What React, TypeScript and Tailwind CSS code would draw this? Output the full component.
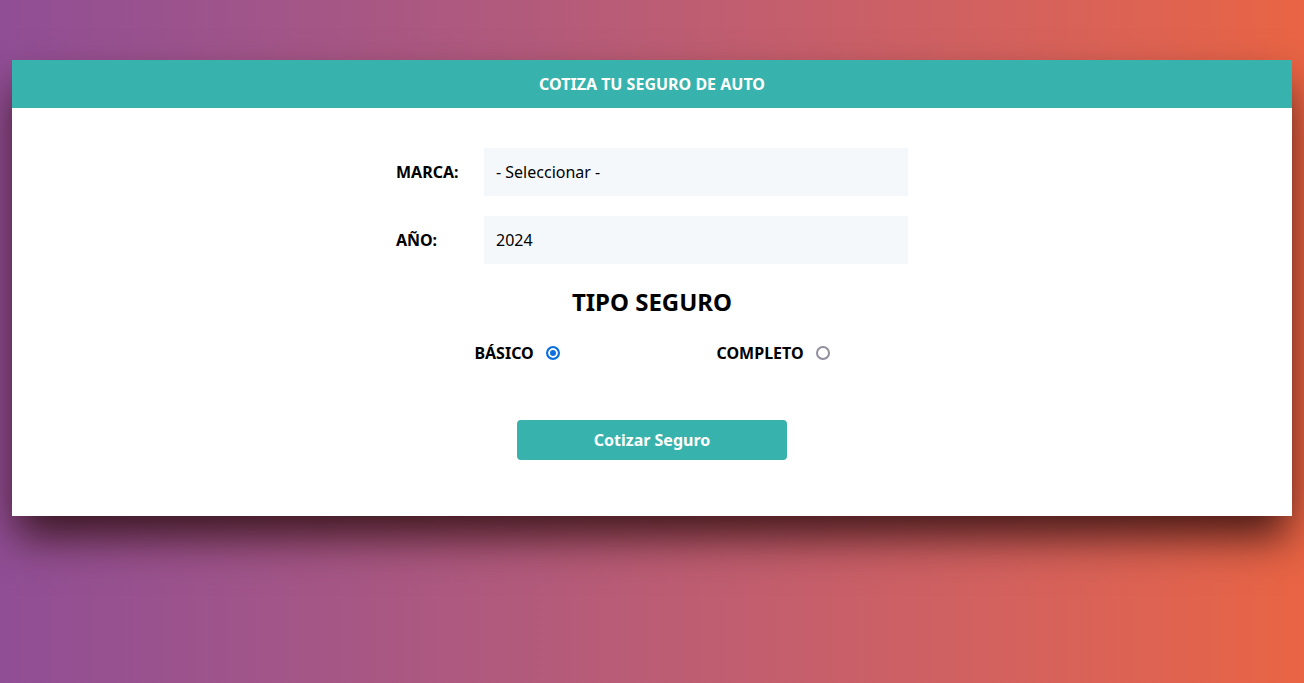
import { useState } from "react";

export default function App() {
  const [plan, setPlan] = useState("basico");

  return (
    <div
      className="min-h-[683px] w-full bg-gradient-to-r from-[#904e95] to-[#e96443] pt-[60px]"
      style={{ fontFamily: '"Noto Sans", "Open Sans", sans-serif' }}
    >
      <div className="mx-3 bg-white shadow-[0_24px_40px_-4px_rgba(40,10,10,0.85)]">
        <header className="flex h-12 items-center justify-center bg-[#38b2ac]">
          <h1 className="text-base font-bold text-white">COTIZA TU SEGURO DE AUTO</h1>
        </header>

        <form className="mx-auto w-[512px] pt-10 pb-14" onSubmit={(e) => e.preventDefault()}>
          <div className="flex items-center">
            <label className="w-[88px] text-base font-bold text-black">MARCA:</label>
            <select className="h-12 flex-1 appearance-none bg-[#f5f8fb] px-3 text-base text-black outline-none">
              <option>- Seleccionar -</option>
              <option>Americano</option>
              <option>Europeo</option>
              <option>Asiático</option>
            </select>
          </div>

          <div className="mt-5 flex items-center">
            <label className="w-[88px] text-base font-bold text-black">AÑO:</label>
            <select className="h-12 flex-1 appearance-none bg-[#f5f8fb] px-3 text-base text-black outline-none">
              <option>2024</option>
              <option>2023</option>
              <option>2022</option>
            </select>
          </div>

          <h2 className="mt-[22px] text-center text-2xl font-bold text-black">TIPO SEGURO</h2>

          <div className="mt-[23px] flex justify-around">
            <label className="flex items-center gap-3 text-base font-bold text-black">
              BÁSICO
              <input
                type="radio"
                name="plan"
                className="h-3.5 w-3.5 appearance-none rounded-full border-2 border-[#8f8f9d] checked:border-[#0b6fe0] checked:bg-[#0b6fe0] checked:shadow-[inset_0_0_0_2px_#fff]"
                checked={plan === "basico"}
                onChange={() => setPlan("basico")}
              />
            </label>
            <label className="flex items-center gap-3 text-base font-bold text-black">
              COMPLETO
              <input
                type="radio"
                name="plan"
                className="h-3.5 w-3.5 appearance-none rounded-full border-2 border-[#8f8f9d] checked:border-[#0b6fe0] checked:bg-[#0b6fe0] checked:shadow-[inset_0_0_0_2px_#fff]"
                checked={plan === "completo"}
                onChange={() => setPlan("completo")}
              />
            </label>
          </div>

          <div className="mt-[55px] flex justify-center">
            <button
              type="submit"
              className="h-10 w-[270px] rounded bg-[#38b2ac] text-base font-bold text-white"
            >
              Cotizar Seguro
            </button>
          </div>
        </form>
      </div>
    </div>
  );
}
